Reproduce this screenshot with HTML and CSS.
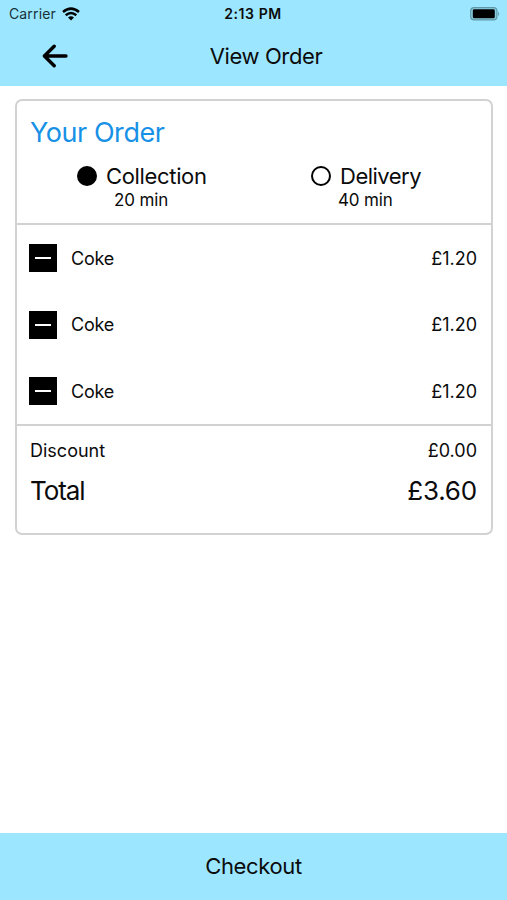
FILE: index.html
```html
<!DOCTYPE html>
<html lang="en">
<head>
<meta charset="utf-8">
<title>View Order</title>
<link rel="stylesheet" href="styles.css">
</head>
<body>
<header class="top">
  <div class="status">
    <div class="carrier"><span>Carrier</span>
      <svg width="18" height="14" viewBox="0 0 18 14" fill="none" stroke="#000" stroke-width="2.5"><path d="M1 5Q9-1.8 17 5"/><path d="M3.7 8.2Q9 3.8 14.3 8.2"/><path d="M6 10.4Q9 8 12 10.4L9 13.4Z" fill="#000" stroke="none"/></svg>
    </div>
    <span class="time">2:13 PM</span>
    <div class="battery">
      <svg width="30" height="14" viewBox="0 0 30 14"><rect x=".7" y=".7" width="26.2" height="12.2" rx="3.4" fill="#8ccfe3" stroke="#5f98a8" stroke-width="1.2"/><rect x="2.8" y="2.3" width="22" height="9" rx="1.4"/><path d="M28.2 4.8q2 2.2 0 4.4z" fill="#5f98a8"/></svg>
    </div>
  </div>
  <nav class="nav">
    <svg class="back" width="26" height="24" viewBox="0 0 26 24" fill="none" stroke="#000" stroke-width="3.4" stroke-linecap="round" stroke-linejoin="round"><path d="M24 12H2.6M12.2 2.2 2.4 12l9.8 9.8"/></svg>
    <h1>View Order</h1>
  </nav>
</header>
<main class="content">
  <section class="card">
    <div class="card-head">
      <h2>Your Order</h2>
      <div class="options">
        <div class="option">
          <div class="choice collection"><i class="radio on"></i><span>Collection</span></div>
          <div class="eta">20 min</div>
        </div>
        <div class="option">
          <div class="choice delivery"><i class="radio"></i><span>Delivery</span></div>
          <div class="eta">40 min</div>
        </div>
      </div>
    </div>
    <div class="items">
      <div class="item"><b class="minus"></b><span class="name">Coke</span><span class="price">£1.20</span></div>
      <div class="item"><b class="minus"></b><span class="name">Coke</span><span class="price">£1.20</span></div>
      <div class="item"><b class="minus"></b><span class="name">Coke</span><span class="price">£1.20</span></div>
    </div>
    <div class="summary">
      <div class="line"><span class="discount">Discount</span><span class="price">£0.00</span></div>
      <div class="line total"><span class="total-label">Total</span><span class="total-price">£3.60</span></div>
    </div>
  </section>
</main>
<footer class="checkout"><span>Checkout</span></footer>
</body>
</html>
```
FILE: styles.css
```css
* { box-sizing: border-box; }
body {
  margin: 0;
  height: 900px;
  display: flex;
  flex-direction: column;
  background: #fff;
  color: #0b0b0c;
  font-family: Inter, "Liberation Sans", sans-serif;
  font-size: 18px;
  white-space: nowrap;
}
h1, h2 { margin: 0; font-weight: 400; }
svg { display: block; }
.top { height: 86px; background: #9ce7ff; }
.status {
  height: 27px;
  display: grid;
  grid-template-columns: 1fr auto 1fr;
  align-items: center;
  padding: 0 7px 0 9px;
}
.carrier { display: flex; align-items: center; gap: 6px; font-size: 14px; letter-spacing: .14px; color: #16323b; }
.time { font-size: 14px; font-weight: 600; letter-spacing: .6px; margin: 0 0 0 -3px; }
.battery { display: flex; justify-content: flex-end; }
.nav {
  height: 58px;
  display: grid;
  grid-template-columns: 1fr auto 1fr;
  align-items: center;
}
.back { margin-left: 42px; }
.nav h1 { grid-column: 2; font-size: 22px; letter-spacing: -.37px; margin-left: 25px; }
.content { flex: 1; padding: 13px 14px 0 15px; }
.card { height: 436px; border: 2px solid #d2d2d2; border-radius: 7px; }
.card-head { height: 124px; border-bottom: 2px solid #d2d2d2; padding: 13px 12px 0 13px; }
h2 { font-size: 27px; line-height: 38px; letter-spacing: -.45px; color: #1791e6; }
.options { display: grid; grid-template-columns: 224px 225px; padding-top: 10px; }
.choice { display: flex; align-items: center; gap: 9px; font-size: 22px; line-height: 28px; letter-spacing: -.34px; }
.collection { padding-left: 47px; }
.delivery { padding-left: 57px; letter-spacing: -.5px; }
.radio { width: 20px; height: 20px; border: 2px solid #000; border-radius: 50%; }
.radio.on { background: #000; }
.eta { font-size: 17px; line-height: 20px; letter-spacing: -.15px; padding-left: 84px; }
.items { height: 201px; border-bottom: 2px solid #d2d2d2; display: grid; grid-template-rows: repeat(3, 66.6px); padding: 0 14px 0 12px; }
.item { display: flex; align-items: center; }
.minus { width: 28px; height: 28px; background: #000; display: grid; place-items: center; margin-right: 14px; }
.minus::before { content: ""; width: 16px; height: 2px; background: #fff; }
.name { letter-spacing: -.2px; }
.price, .total-price { margin-left: auto; }
.summary { padding: 10px 14px 0 13px; }
.line { display: flex; align-items: center; height: 28px; }
.total { font-size: 26px; height: 53px; }
.total-label { letter-spacing: -1.1px; }
.total-price { letter-spacing: -.2px; }
.checkout { height: 67px; background: #9ce7ff; display: grid; place-items: center; font-size: 22px; letter-spacing: -.35px; padding-bottom: 1px; }
```
